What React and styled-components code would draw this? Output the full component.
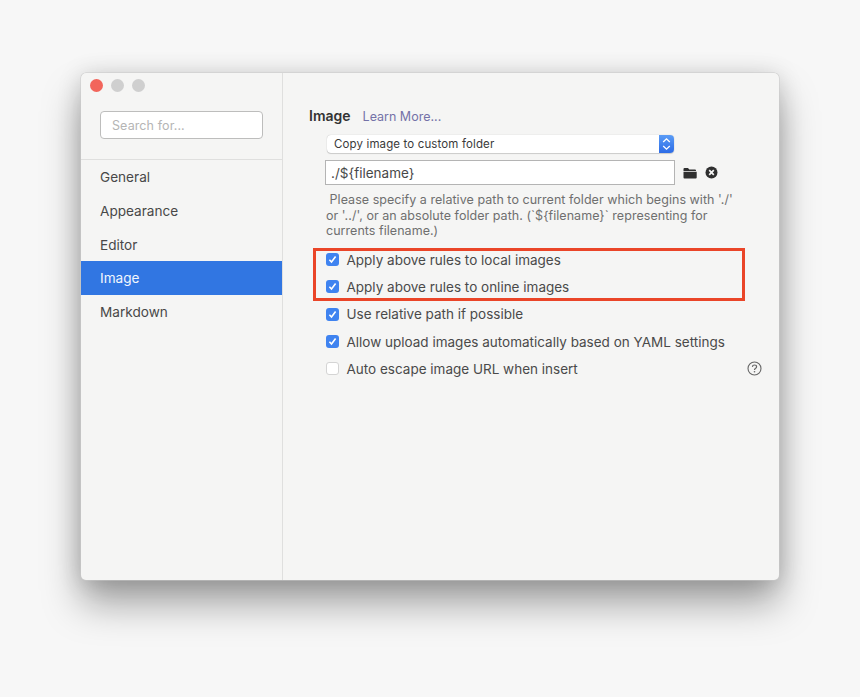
import styled, { createGlobalStyle } from "styled-components";

const GlobalStyle = createGlobalStyle`
  html, body {
    margin: 0;
    padding: 0;
    background: #f7f7f7;
  }
  body {
    width: 860px;
    height: 697px;
    overflow: hidden;
    font-family: Inter, "Open Sans", "Liberation Sans", sans-serif;
    -webkit-font-smoothing: antialiased;
  }
`;

const Page = styled.div`
  box-sizing: border-box;
  width: 860px;
  height: 697px;
  padding: 73px 81px 117px;
`;

const Window = styled.div`
  position: relative;
  display: flex;
  height: 507px;
  background: #f5f5f4;
  border-radius: 5px;
  box-shadow: 0 0 0 0.5px #c9c9c9, 0 24px 38px rgba(0, 0, 0, 0.34),
    0 2px 24px rgba(0, 0, 0, 0.16);
`;

const Sidebar = styled.aside`
  flex: 0 0 201px;
  display: flex;
  flex-direction: column;
  border-right: 1px solid #dfdfde;
`;

const Lights = styled.div`
  display: flex;
  gap: 8px;
  padding: 6px 0 0 9px;
  height: 32px;
`;

const Light = styled.span`
  width: 13px;
  height: 13px;
  border-radius: 50%;
  background: ${(p) => p.$color};
`;

const SearchBox = styled.div`
  box-sizing: border-box;
  width: 163px;
  height: 28px;
  margin: 0 0 0 19px;
  padding: 0 11px;
  display: flex;
  align-items: center;
  background: #fff;
  border: 1px solid #bdbdbc;
  border-radius: 4px;
  color: #b5b5b5;
  font-size: 12.5px;
  letter-spacing: 0.1px;
`;

const Nav = styled.nav`
  margin-top: 20px;
  border-top: 1px solid #dfdfde;
  display: flex;
  flex-direction: column;
`;

const NavItem = styled.div`
  height: 33.7px;
  display: flex;
  align-items: center;
  padding: 1px 0 0 19px;
  box-sizing: border-box;
  font-size: 13.6px;
  color: ${(p) => (p.$active ? "#f2f6fd" : "#484848")};
  background: ${(p) => (p.$active ? "#3176e2" : "transparent")};
`;

const Content = styled.main`
  flex: 1;
  padding: 34px 0 0 26px;
  display: flex;
  flex-direction: column;
`;

const Heading = styled.div`
  display: flex;
  align-items: baseline;
  gap: 12px;
  height: 17px;
`;

const Title = styled.span`
  font-size: 14px;
  font-weight: 600;
  color: #333;
`;

const LearnMore = styled.a`
  font-size: 12.5px;
  color: #7472a8;
`;

const SelectBox = styled.div`
  box-sizing: border-box;
  width: 347.5px;
  height: 18px;
  margin: 11px 0 0 17.5px;
  display: flex;
  align-items: center;
  justify-content: space-between;
  background: #fff;
  border-radius: 4px;
  box-shadow: 0 0 1px rgba(0, 0, 0, 0.3), 0 1px 1px rgba(0, 0, 0, 0.15);
  font-size: 11.5px;
  letter-spacing: 0.13px;
  color: #3a3a3a;
  padding-left: 7.5px;
`;

const Stepper = styled.span`
  width: 15px;
  height: 18px;
  background: linear-gradient(#5a9cf6, #2c6be6);
  border-radius: 0 4px 4px 0;
  display: flex;
  align-items: center;
  justify-content: center;
`;

const PathRow = styled.div`
  display: flex;
  align-items: center;
  margin: 7px 0 0 16px;
`;

const PathInput = styled.div`
  box-sizing: border-box;
  width: 350px;
  height: 25px;
  display: flex;
  align-items: center;
  padding-left: 5px;
  background: #fff;
  border: 1px solid #b4b4b4;
  font-size: 13.5px;
  color: #484848;
`;

const IconSlot = styled.span`
  display: flex;
  margin-left: ${(p) => p.$gap}px;
`;

const Help = styled.p`
  width: 420px;
  margin: 7px 0 0 17px;
  font-size: 12.5px;
  line-height: 15.5px;
  color: #6f6f6f;
  letter-spacing: 0.04px;
`;

const Options = styled.div`
  display: flex;
  flex-direction: column;
  margin: 7.5px 0 0 16.5px;
`;

const Option = styled.label`
  position: relative;
  height: 27.3px;
  display: flex;
  align-items: center;
  gap: 8px;
  font-size: 13.5px;
  color: #4a4a4a;
`;

const Check = styled.span`
  box-sizing: border-box;
  width: 13px;
  height: 13px;
  border-radius: 3px;
  display: flex;
  align-items: center;
  justify-content: center;
  background: ${(p) => (p.$on ? "#3f83f0" : "#fff")};
  border: ${(p) => (p.$on ? "none" : "1px solid #d4d4d4")};
`;

const HelpIcon = styled.span`
  position: absolute;
  left: 421px;
  top: 6px;
  display: flex;
`;

const Highlight = styled.div`
  position: absolute;
  left: 232px;
  top: 175px;
  width: 432px;
  height: 53px;
  box-sizing: border-box;
  border: 3px solid #ea4528;
  pointer-events: none;
`;

function Tick() {
  return (
    <svg width="9" height="9" viewBox="0 0 9 9" fill="none">
      <path d="M1.4 4.8 L3.5 7 L7.6 1.6" stroke="#fff" strokeWidth="1.6" />
    </svg>
  );
}

const helpText =
  "\u00a0Please specify a relative path to current folder which begins with './' or '../', or an absolute folder path. (`${filename}` representing for currents filename.)";

function App() {
  const navItems = ["General", "Appearance", "Editor", "Image", "Markdown"];
  const options = [
    { label: "Apply above rules to local images", on: true },
    { label: "Apply above rules to online images", on: true },
    { label: "Use relative path if possible", on: true },
    { label: "Allow upload images automatically based on YAML settings", on: true },
    { label: "Auto escape image URL when insert", on: false, help: true },
  ];

  return (
    <Page>
      <GlobalStyle />
      <Window>
        <Sidebar>
          <Lights>
            <Light $color="#f2655b" />
            <Light $color="#cfcfcf" />
            <Light $color="#cfcfcf" />
          </Lights>
          <SearchBox>Search for...</SearchBox>
          <Nav>
            {navItems.map((item) => (
              <NavItem key={item} $active={item === "Image"}>
                {item}
              </NavItem>
            ))}
          </Nav>
        </Sidebar>
        <Content>
          <Heading>
            <Title>Image</Title>
            <LearnMore>Learn More...</LearnMore>
          </Heading>
          <SelectBox>
            Copy image to custom folder
            <Stepper>
              <svg width="9" height="14" viewBox="0 0 9 14" fill="none">
                <path d="M1.2 5 L4.5 1.8 L7.8 5 M1.2 9 L4.5 12.2 L7.8 9" stroke="#fff" strokeWidth="1.3" />
              </svg>
            </Stepper>
          </SelectBox>
          <PathRow>
            <PathInput>{"./${filename}"}</PathInput>
            <IconSlot $gap={8}>
              <svg width="14" height="12" viewBox="0 0 14 12">
                <path d="M0.5 2 Q0.5 1 1.5 1 H5 L6.3 2.5 H12 Q13 2.5 13 3.5 V4 H0.5 Z M0.5 4.8 H13.7 V10.5 Q13.7 11.5 12.7 11.5 H1.5 Q0.5 11.5 0.5 10.5 Z" fill="#2f2f2f" />
              </svg>
            </IconSlot>
            <IconSlot $gap={8}>
              <svg width="13" height="13" viewBox="0 0 13 13">
                <circle cx="6.5" cy="6.5" r="6" fill="#2f2f2f" />
                <path d="M4.2 4.2 L8.8 8.8 M8.8 4.2 L4.2 8.8" stroke="#f5f5f4" strokeWidth="1.7" />
              </svg>
            </IconSlot>
          </PathRow>
          <Help>{helpText}</Help>
          <Options>
            {options.map(({ label, on, help }) => (
              <Option key={label}>
                <Check $on={on}>{on && <Tick />}</Check>
                {label}
                {help && (
                  <HelpIcon>
                    <svg width="15" height="15" viewBox="0 0 15 15" fill="none">
                      <circle cx="7.5" cy="7.5" r="6.5" stroke="#666" strokeWidth="1.1" />
                      <path d="M5.4 5.9 Q5.5 4 7.5 4 Q9.6 4 9.6 5.7 Q9.6 6.8 8.4 7.4 Q7.5 7.9 7.5 9" stroke="#666" strokeWidth="1.2" />
                      <circle cx="7.5" cy="10.8" r="0.8" fill="#666" />
                    </svg>
                  </HelpIcon>
                )}
              </Option>
            ))}
          </Options>
        </Content>
        <Highlight />
      </Window>
    </Page>
  );
}

export default App;
